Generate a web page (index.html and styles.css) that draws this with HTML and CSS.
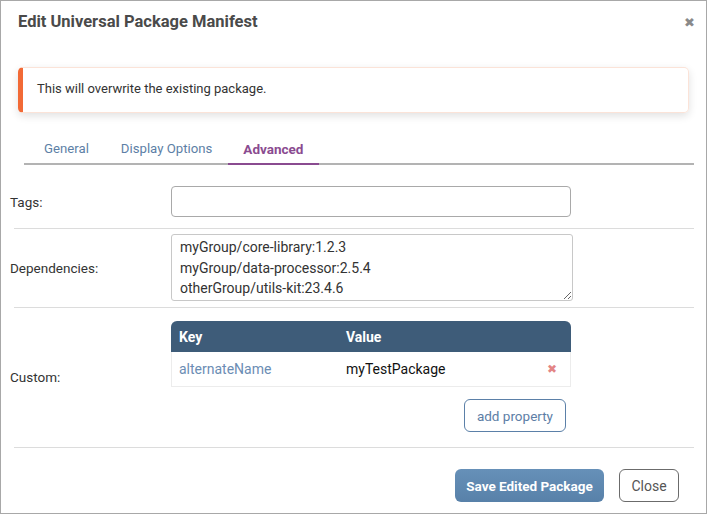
FILE: index.html
```
<!DOCTYPE html>
<html>
<head>
<meta charset="utf-8">
<link rel="stylesheet" href="styles.css">
</head>
<body>
<div class="dialog">
  <div class="header">
    <h1 class="title">Edit Universal Package Manifest</h1>
    <span class="close-x">&#10006;</span>
  </div>
  <div class="alert">This will overwrite the existing package.</div>
  <div class="tabs">
    <div class="tab">General</div>
    <div class="tab">Display Options</div>
    <div class="tab active">Advanced</div>
  </div>
  <div class="form">
    <div class="row row-tags">
      <label class="lbl">Tags:</label>
      <input class="input" type="text">
    </div>
    <div class="sep"></div>
    <div class="row row-deps">
      <label class="lbl">Dependencies:</label>
      <textarea class="textarea">myGroup/core-library:1.2.3
myGroup/data-processor:2.5.4
otherGroup/utils-kit:23.4.6</textarea>
    </div>
    <div class="sep"></div>
    <div class="row row-custom">
      <label class="lbl">Custom:</label>
      <div class="custom">
        <div class="table">
          <div class="thead">
            <div class="c-key">Key</div>
            <div class="c-val">Value</div>
          </div>
          <div class="trow">
            <div class="c-key key-text">alternateName</div>
            <div class="c-val val-text">myTestPackage</div>
            <span class="del">&#10006;</span>
          </div>
        </div>
        <div class="add-wrap"><button class="btn-add">add property</button></div>
      </div>
    </div>
    <div class="sep"></div>
  </div>
  <div class="footer">
    <button class="btn-save">Save Edited Package</button>
    <button class="btn-close">Close</button>
  </div>
</div>
</body>
</html>
```
FILE: styles.css
```
* { box-sizing: border-box; }
html, body { margin: 0; padding: 0; background: #fff; }
body { font-family: Roboto, "Liberation Sans", sans-serif; color: #333; }

.dialog {
  width: 707px;
  height: 514px;
  border: 1px solid #a8a8a8;
  background: #fff;
  overflow: hidden;
}

.header {
  display: flex;
  justify-content: space-between;
  align-items: flex-start;
  padding: 11px 11px 0 17px;
  height: 42px;
}
.title {
  margin: 0;
  font-size: 16.5px;
  font-weight: 700;
  line-height: 20px;
  color: #4a4a4a;
}
.close-x {
  font-size: 13px;
  color: #8a8a8a;
  line-height: 20px;
  margin-top: 1px;
}

.alert {
  margin: 24px 17px 0 17px;
  height: 46px;
  border: 1px solid #fbe3d8;
  border-left: 5px solid #f26a36;
  border-radius: 5px;
  box-shadow: 0 3px 8px rgba(0,0,0,0.12);
  padding-left: 14px;
  padding-bottom: 3px;
  display: flex;
  align-items: center;
  font-size: 13px;
  color: #333;
}

.tabs {
  display: flex;
  align-items: flex-end;
  margin: 18px 12px 0 23px;
  padding-left: 4px;
  border-bottom: 2px solid #b3b3b3;
}
.tab {
  padding: 10px 16px 6px;
  line-height: 16px;
  font-size: 13.2px;
  color: #5d7fa6;
}
.tab.active {
  color: #8a4b90;
  font-weight: 700;
  font-size: 13.5px;
  padding-left: 15px;
  border-bottom: 2px solid #8a4b90;
  margin-bottom: -2px;
}

.form { margin-top: 11px; }
.row {
  display: grid;
  grid-template-columns: 161px 1fr;
  align-items: center;
  padding-left: 9px;
}
.lbl { font-size: 13.5px; color: #333; }
.sep { height: 1px; background: #dcdcdc; margin: 0 12px 0 13px; }

.row-tags { padding-top: 10px; padding-bottom: 11px; }
.input {
  width: 400px;
  height: 31px;
  border: 1px solid #a9a9a9;
  border-radius: 4px;
  margin: 0;
}

.row-deps { padding-top: 5px; padding-bottom: 6px; }
.textarea {
  width: 402px;
  height: 67px;
  border: 1px solid #c8c8c8;
  border-radius: 3px;
  margin: 0;
  padding: 2px 8px;
  font-family: Roboto, "Liberation Sans", sans-serif;
  font-size: 14px;
  line-height: 20.5px;
  color: #333;
  resize: vertical;
  overflow: hidden;
}

.row-custom { padding-top: 13px; padding-bottom: 15px; }
.custom { width: 400px; }
.table {
  border: 1px solid #ececec;
  border-top: none;
  border-radius: 6px 6px 0 0;
}
.thead {
  display: flex;
  height: 31px;
  align-items: center;
  background: #3e5c79;
  border-radius: 6px 6px 0 0;
  margin: 0 -1px;
  color: #fff;
  font-weight: 700;
  font-size: 14px;
}
.c-key { width: 175px; padding-left: 8px; }
.c-val { flex: 1; padding-left: 0; }
.thead .c-key { padding-left: 8px; width: 175px; }
.trow {
  display: flex;
  align-items: center;
  height: 34px;
  font-size: 14px;
}
.key-text { color: #6b8db4; padding-left: 7px; width: 174px; }
.val-text { color: #111; }
.del {
  color: #e38585;
  font-size: 12px;
  margin-right: 13px;
}

.add-wrap { display: flex; justify-content: flex-end; padding-right: 5px; margin-top: 12px; }
.btn-add {
  height: 33px;
  padding: 0 12px;
  background: #fff;
  border: 1px solid #5b80a8;
  border-radius: 6px;
  color: #5d7ea6;
  font-family: Roboto, "Liberation Sans", sans-serif;
  font-size: 13.5px;
}

.footer {
  display: flex;
  justify-content: flex-end;
  gap: 15px;
  padding: 21px 27px 0 0;
}
.btn-save {
  width: 149px;
  height: 33px;
  border: none;
  border-radius: 6px;
  background: linear-gradient(#6690b8, #5881a9);
  color: #fff;
  font-family: Roboto, "Liberation Sans", sans-serif;
  font-weight: 700;
  font-size: 13.5px;
}
.btn-close {
  width: 60px;
  height: 33px;
  background: #fff;
  border: 1px solid #6b6b6b;
  border-radius: 6px;
  color: #555;
  font-family: Roboto, "Liberation Sans", sans-serif;
  font-size: 14px;
}
```
